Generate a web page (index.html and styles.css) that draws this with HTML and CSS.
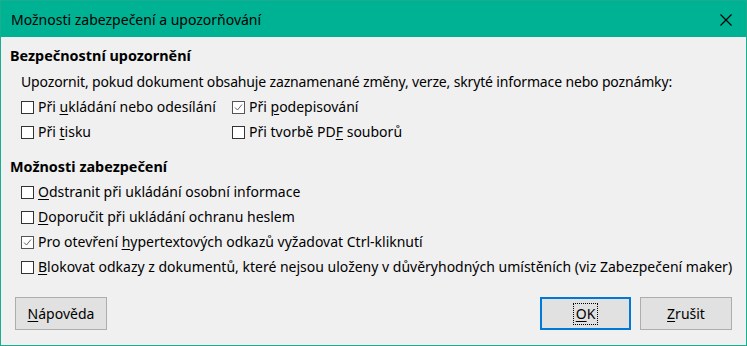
FILE: index.html
```html
<!DOCTYPE html>
<html lang="cs">
<head>
<meta charset="utf-8">
<title>Možnosti zabezpečení a upozorňování</title>
<link rel="stylesheet" href="styles.css">
</head>
<body>
<div class="window">
  <div class="titlebar">
    <span class="title">Možnosti zabezpečení a upozorňování</span>
    <svg class="close" width="12" height="12" viewBox="0 0 12 12"><path d="M0.5 0.5 L11.5 11.5 M11.5 0.5 L0.5 11.5" stroke="#000" stroke-width="1.1" fill="none"/></svg>
  </div>
  <div class="content">
    <div class="heading">Bezpečnostní upozornění</div>
    <div class="desc">Upozornit, pokud dokument obsahuje zaznamenané změny, verze, skryté informace nebo poznámky:</div>
    <div class="grid">
      <label class="check"><span class="box"></span><span>Při <u>u</u>kládání nebo odesílání</span></label>
      <label class="check"><span class="box checked"><svg width="9" height="9" viewBox="0 0 9 9"><path d="M1 4.5 L3.5 7 L8 1.5" stroke="#666" stroke-width="1" fill="none"/></svg></span><span>Při <u>p</u>odepisování</span></label>
      <label class="check"><span class="box"></span><span>Při <u>t</u>isku</span></label>
      <label class="check"><span class="box"></span><span>Při tvorbě PD<u>F</u> souborů</span></label>
    </div>
    <div class="heading second">Možnosti zabezpečení</div>
    <div class="list">
      <label class="check"><span class="box"></span><span><u>O</u>dstranit při ukládání osobní informace</span></label>
      <label class="check"><span class="box"></span><span><u>D</u>oporučit při ukládání ochranu heslem</span></label>
      <label class="check"><span class="box checked"><svg width="9" height="9" viewBox="0 0 9 9"><path d="M1 4.5 L3.5 7 L8 1.5" stroke="#666" stroke-width="1" fill="none"/></svg></span><span>Pro otevření <u>h</u>ypertextových odkazů vyžadovat Ctrl-kliknutí</span></label>
      <label class="check"><span class="box"></span><span><u>B</u>lokovat odkazy z dokumentů, které nejsou uloženy v důvěryhodných umístěních (viz Zabezpečení maker)</span></label>
    </div>
    <div class="buttons">
      <button class="btn"><u>N</u>ápověda</button>
      <div class="spacer"></div>
      <button class="btn default"><span class="focus"><u>O</u>K</span></button>
      <button class="btn"><u>Z</u>rušit</button>
    </div>
  </div>
</div>
</body>
</html>
```

FILE: styles.css
```css
html, body {
  margin: 0;
  padding: 0;
  background: #f0f0f0;
}
.window {
  width: 747px;
  height: 346px;
  box-sizing: border-box;
  border: 1px solid #1aae91;
  background: #f0f0f0;
  font-family: "Noto Sans", "Open Sans", sans-serif;
  font-size: 14px;
  color: #000;
  display: flex;
  flex-direction: column;
}
.titlebar {
  height: 36px;
  background: #00b294;
  display: flex;
  align-items: center;
  padding-left: 10px;
  padding-right: 14px;
  flex: none;
}
.title {
  flex: 1;
  font-size: 14px;
  padding-top: 1px;
}
.close {
  display: block;
  margin-top: 1px;
}
.content {
  padding: 6px 14px 0 9px;
  display: flex;
  flex-direction: column;
}
.heading {
  font-weight: bold;
  font-size: 14.4px;
  line-height: 25px;
  height: 25px;
}
.heading.second {
  margin-top: 10px;
}
.desc {
  margin-top: 1px;
  padding-left: 11px;
  line-height: 25px;
  height: 25px;
  white-space: nowrap;
  letter-spacing: -0.15px;
}
.grid {
  display: grid;
  grid-template-columns: 211px auto;
  padding-left: 11px;
}
.list {
  display: flex;
  flex-direction: column;
  padding-left: 11px;
}
.check {
  display: flex;
  align-items: center;
  height: 25px;
  line-height: 25px;
  white-space: nowrap;
}
.box {
  width: 13px;
  height: 13px;
  box-sizing: border-box;
  border: 1px solid #333;
  background: #fff;
  margin-right: 4px;
  flex: none;
  display: flex;
  align-items: center;
  justify-content: center;
  margin-top: 1px;
}
.box.checked {
  border-color: #555;
}
.box svg {
  display: block;
}
u {
  text-decoration: underline;
  text-underline-offset: 2px;
}
.buttons {
  display: flex;
  margin-top: 18px;
  padding-left: 5px;
  gap: 9px;
}
.spacer {
  flex: 1;
}
.btn {
  width: 92px;
  height: 33px;
  box-sizing: border-box;
  border: 1px solid #adadad;
  background: #e1e1e1;
  font-family: inherit;
  font-size: 14px;
  color: #000;
  padding: 0;
  display: flex;
  align-items: center;
  justify-content: center;
}
.btn.default {
  border: 2px solid #0078d7;
  width: 91px;
}
.focus {
  outline: 1px dotted #000;
  padding: 1px 2px;
  line-height: 18px;
}
```
